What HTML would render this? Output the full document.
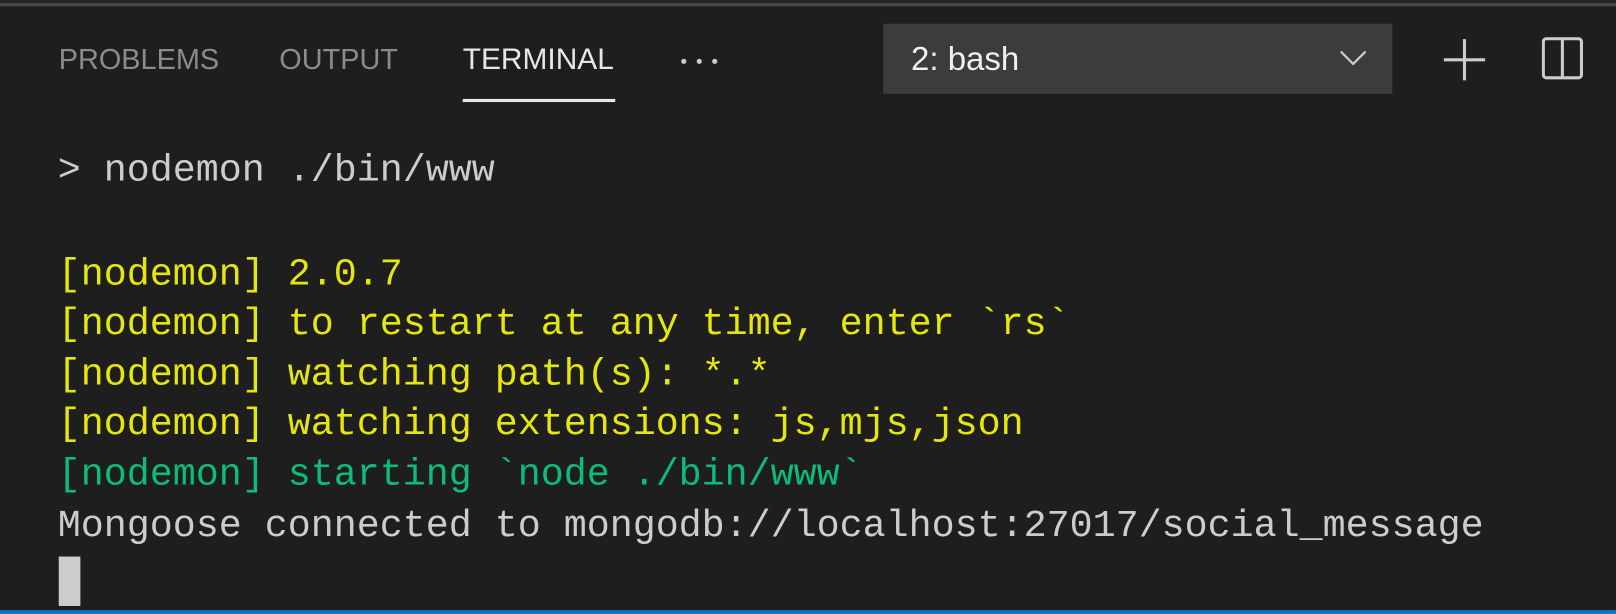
<!DOCTYPE html>
<html><head><meta charset="utf-8"><style>
html,body{margin:0;padding:0;}
body{width:1616px;height:613px;background:#1e1e1e;position:relative;overflow:hidden;}
#w{position:absolute;left:0;top:0;width:1568px;height:595px;transform:scale(1.0306);transform-origin:0 0;}
.topbar{position:absolute;left:0;top:0;width:1568px;height:3px;background:#252526;}
.topline{position:absolute;left:0;top:3px;width:1568px;height:3px;background:#474747;}
.botline{position:absolute;left:0;top:592px;width:1568px;height:4px;background:#007acc;}
.tab{position:absolute;top:38px;font-family:"Liberation Sans",sans-serif;font-size:28px;line-height:40px;color:#8b8b8b;}
.term{color:#e7e7e7;}
.ul{position:absolute;left:449px;top:96px;width:148px;height:3px;background:#e7e7e7;}
.dots{position:absolute;left:661px;top:57px;}
.dots span{position:absolute;top:0;width:5px;height:5px;border-radius:50%;background:#cccccc;}
.dd{position:absolute;left:857px;top:23px;width:494px;height:68px;background:#3c3c3c;}
.dd .t{position:absolute;left:27px;top:14px;font-family:"Liberation Sans",sans-serif;font-size:32px;line-height:40px;color:#f0f0f0;}
.line{position:absolute;left:56px;font-family:"Liberation Mono","DejaVu Sans Mono",monospace;font-size:37.2px;line-height:49px;white-space:pre;color:#cccccc;}
.y{color:#e5e510;}
.g{color:#0dbc79;}
.cur{position:absolute;left:57px;top:540px;width:21px;height:48px;background:#cccccc;}
</style></head><body><div id="w">
<div class="topbar"></div><div class="topline"></div>
<div class="tab" style="left:57px">PROBLEMS</div>
<div class="tab" style="left:271px">OUTPUT</div>
<div class="tab term" style="left:449px;font-size:29px">TERMINAL</div>
<div class="ul"></div>
<div class="dots"><span style="left:0"></span><span style="left:15px"></span><span style="left:30px"></span></div>
<div class="dd"><div class="t">2: bash</div>
<svg style="position:absolute;left:443px;top:25px" width="26" height="16" viewBox="0 0 26 16"><path d="M1 2 L13 14 L25 2" fill="none" stroke="#cccccc" stroke-width="2.2"/></svg>
</div>
<svg style="position:absolute;left:1400px;top:37px" width="42" height="42" viewBox="0 0 42 42"><path d="M21 1 V41 M1 21 H41" stroke="#cccccc" stroke-width="3"/></svg>
<svg style="position:absolute;left:1496px;top:36px" width="40" height="42" viewBox="0 0 40 42"><rect x="1.5" y="1.5" width="37" height="38" rx="3" fill="none" stroke="#cccccc" stroke-width="3"/><path d="M20 2 V40" stroke="#cccccc" stroke-width="3"/></svg>
<div class="line" style="top:142px">&gt; nodemon ./bin/www</div>
<div class="line y" style="top:243px">[nodemon] 2.0.7</div>
<div class="line y" style="top:291px">[nodemon] to restart at any time, enter `rs`</div>
<div class="line y" style="top:340px">[nodemon] watching path(s): *.*</div>
<div class="line y" style="top:388px">[nodemon] watching extensions: js,mjs,json</div>
<div class="line g" style="top:437px">[nodemon] starting `node ./bin/www`</div>
<div class="line" style="top:487px">Mongoose connected to mongodb://localhost:27017/social_message</div>
<div class="cur"></div>
<div class="botline"></div>
</div></body></html>
